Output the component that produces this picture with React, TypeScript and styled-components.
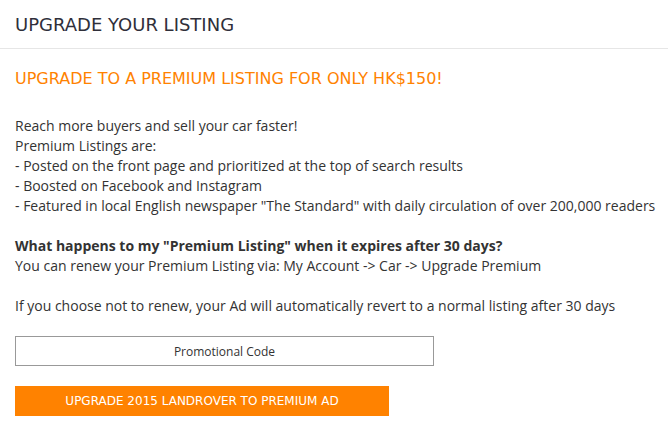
import React from "react";
import styled, { createGlobalStyle } from "styled-components";

const Global = createGlobalStyle`
  html, body { margin: 0; padding: 0; background: #fff; }
  body { font-family: "Open Sans", "Liberation Sans", sans-serif; color: #333; }
  * { box-sizing: border-box; }
`;

const Page = styled.div`
  width: 668px;
  display: flex;
  flex-direction: column;
`;

const Header = styled.div`
  height: 49px;
  border-bottom: 1px solid #e6e6e6;
  display: flex;
  align-items: center;
  padding: 2px 15px 0;
`;

const Title = styled.h1`
  margin: 0;
  font-family: "DejaVu Sans", "Noto Sans", sans-serif;
  font-weight: 400;
  font-size: 18px;
  color: #2f2f3a;
  text-transform: uppercase;
  line-height: 46px;
`;

const Body = styled.div`
  padding: 19px 4px 0 15px;
  display: flex;
  flex-direction: column;
  align-items: flex-start;
`;

const Promo = styled.h2`
  margin: 0;
  font-family: "DejaVu Sans", "Noto Sans", sans-serif;
  font-weight: 400;
  font-size: 16px;
  color: #ff8200;
  text-transform: uppercase;
  line-height: 22px;
`;

const Text = styled.p<{ $gap?: number }>`
  margin: 0;
  font-size: 14px;
  line-height: 20px;
  color: #333;
  white-space: nowrap;
  margin-top: ${(p) => p.$gap ?? 0}px;
`;

const Bold = styled.strong`
  font-weight: 700;
`;

const PromoInput = styled.input`
  margin-top: 20px;
  width: 419px;
  height: 30px;
  border: 1px solid #999;
  font-family: "Open Sans", "Liberation Sans", sans-serif;
  font-size: 12px;
  color: #333;
  text-align: center;
  outline: none;
  &::placeholder { color: #333; opacity: 1; }
`;

const UpgradeButton = styled.button`
  margin-top: 20px;
  width: 374px;
  height: 30px;
  border: none;
  background: #ff8200;
  color: #fff;
  font-family: "DejaVu Sans", "Noto Sans", sans-serif;
  font-size: 12px;
  text-transform: uppercase;
  cursor: pointer;
  padding: 0;
`;

export default function App() {
  return (
    <>
      <Global />
      <Page>
        <Header>
          <Title>Upgrade your listing</Title>
        </Header>
        <Body>
          <Promo>Upgrade to a premium listing for only HK$150!</Promo>
          <Text $gap={26}>
            Reach more buyers and sell your car faster!
            <br />
            Premium Listings are:
            <br />- Posted on the front page and prioritized at the top of search results
            <br />- Boosted on Facebook and Instagram
            <br />- Featured in local English newspaper "The Standard" with daily circulation of over 200,000 readers
          </Text>
          <Text $gap={20}>
            <Bold>What happens to my "Premium Listing" when it expires after 30 days?</Bold>
            <br />
            You can renew your Premium Listing via: My Account -&gt; Car -&gt; Upgrade Premium
          </Text>
          <Text $gap={20}>
            If you choose not to renew, your Ad will automatically revert to a normal listing after 30 days
          </Text>
          <PromoInput placeholder="Promotional Code" />
          <UpgradeButton>Upgrade 2015 Landrover to Premium Ad</UpgradeButton>
        </Body>
      </Page>
    </>
  );
}
